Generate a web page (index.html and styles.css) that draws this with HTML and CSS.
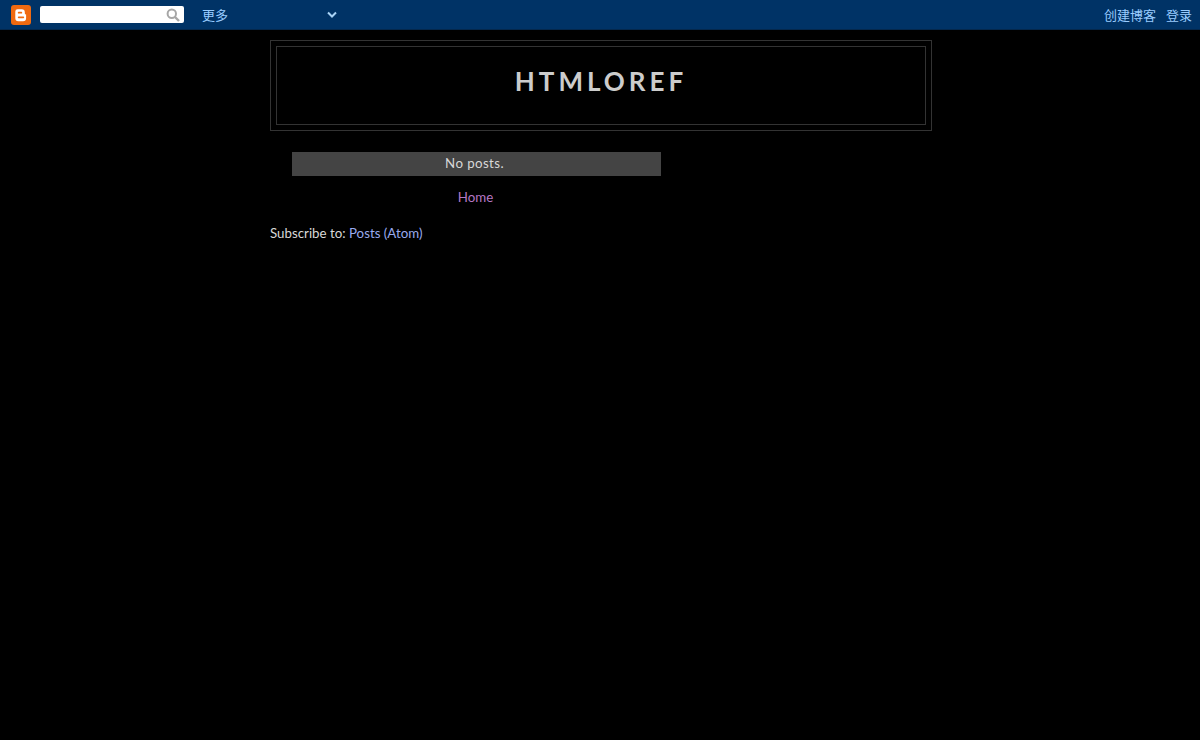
FILE: index.html
```html
<!DOCTYPE html>
<html lang="zh">
<head>
    <meta charset="UTF-8">
    <title>HTMLOREF</title>
    <link rel="stylesheet" href="styles.css">
</head>
<body>
    <!-- Navbar -->
    <div class="navbar">
        <svg class="logo" viewBox="0 0 20 20" width="20" height="20">
            <rect width="20" height="20" rx="3" fill="#f06a10"/>
            <path d="M6.6 4.2h4.2a3 3 0 0 1 3 3v1.1a1.3 1.3 0 0 0 1.3 1.3v3.600a3 3 0 0 1-3 3H7.300a3 3 0 0 1-3-3V6.500a2.300 2.300 0 0 1 2.300-2.300z" fill="#fff"/>
            <rect x="6.800" y="6.800" width="4.400" height="1.800" rx=".9" fill="#f06a10"/>
            <rect x="6.800" y="11.400" width="6.400" height="1.800" rx=".9" fill="#f06a10"/>
        </svg>
        <div class="search">
            <svg viewBox="0 0 14 14" width="14" height="14">
                <circle cx="5.800" cy="5.800" r="4.200" fill="none" stroke="#a6a6a6" stroke-width="2"/>
                <path d="M9 9l4 4" stroke="#a6a6a6" stroke-width="2.400"/>
            </svg>
        </div>
        <a class="more" href="#">更多</a>
        <svg class="chevron" viewBox="0 0 10 8" width="10" height="8">
            <path d="M1 1.500l4 4 4-4" fill="none" stroke="#a9d3f5" stroke-width="2"/>
        </svg>
        <div class="nav-right">
            <a href="#">创建博客</a>
            <a href="#">登录</a>
        </div>
    </div>

    <div class="page">
        <div class="header">
            <div class="header-inner">
                <h1>HTMLOREF</h1>
            </div>
        </div>

        <div class="main">
            <div class="no-posts">No posts.</div>
            <div class="pager"><a href="#">Home</a></div>
        </div>

        <div class="subscribe">Subscribe to: <a href="#">Posts (Atom)</a></div>
    </div>
</body>
</html>
```

FILE: styles.css
```css
* {
    box-sizing: border-box;
}

body {
    margin: 0;
    min-height: 100vh;
    background: #000;
    color: #d8d8d8;
    font-family: 'Lato', 'Noto Sans CJK SC', sans-serif;
    font-size: 13.300px;
}

a {
    text-decoration: none;
}

/* Navbar */
.navbar {
    display: flex;
    align-items: center;
    height: 30px;
    padding: 0 8px 0 11px;
    background: #003366;
    border-bottom: 1px solid #04284d;
}

.logo {
    flex: none;
}

.search {
    display: flex;
    justify-content: flex-end;
    align-items: center;
    width: 144px;
    height: 17px;
    margin-left: 9px;
    padding-right: 4px;
    background: #fff;
    border-radius: 2px;
}

.more {
    margin-left: 18px;
    color: #99ccff;
    font-family: 'Noto Sans CJK SC', sans-serif;
    font-size: 13px;
}

.chevron {
    margin-left: 99px;
}

.nav-right {
    display: flex;
    gap: 10px;
    margin-left: auto;
}

.nav-right a {
    color: #99ccff;
    font-family: 'Noto Sans CJK SC', sans-serif;
    font-size: 13px;
}

.page {
    width: 662px;
    margin-left: 270px;
}

.header {
    margin-top: 10px;
    padding: 5px;
    border: 1px solid #333;
}

.header-inner {
    height: 79px;
    border: 1px solid #333;
}

.header-inner h1 {
    margin: 0;
    padding-top: 17px;
    text-align: center;
    color: #ccc;
    font-size: 26px;
    line-height: 34px;
    letter-spacing: 4px;
}

.main {
    width: 369px;
    margin: 21px 0 0 22px;
    text-align: center;
}

.no-posts {
    height: 24px;
    padding-right: 4px;
    line-height: 22px;
    letter-spacing: 0.400px;
    background: #444;
}

.pager {
    margin-top: 12px;
    padding-right: 2px;
    line-height: 18px;
}

.pager a {
    color: #b577c5;
}

.subscribe {
    margin-top: 18px;
    line-height: 18px;
}

.subscribe a {
    color: #99aaee;
}
```
